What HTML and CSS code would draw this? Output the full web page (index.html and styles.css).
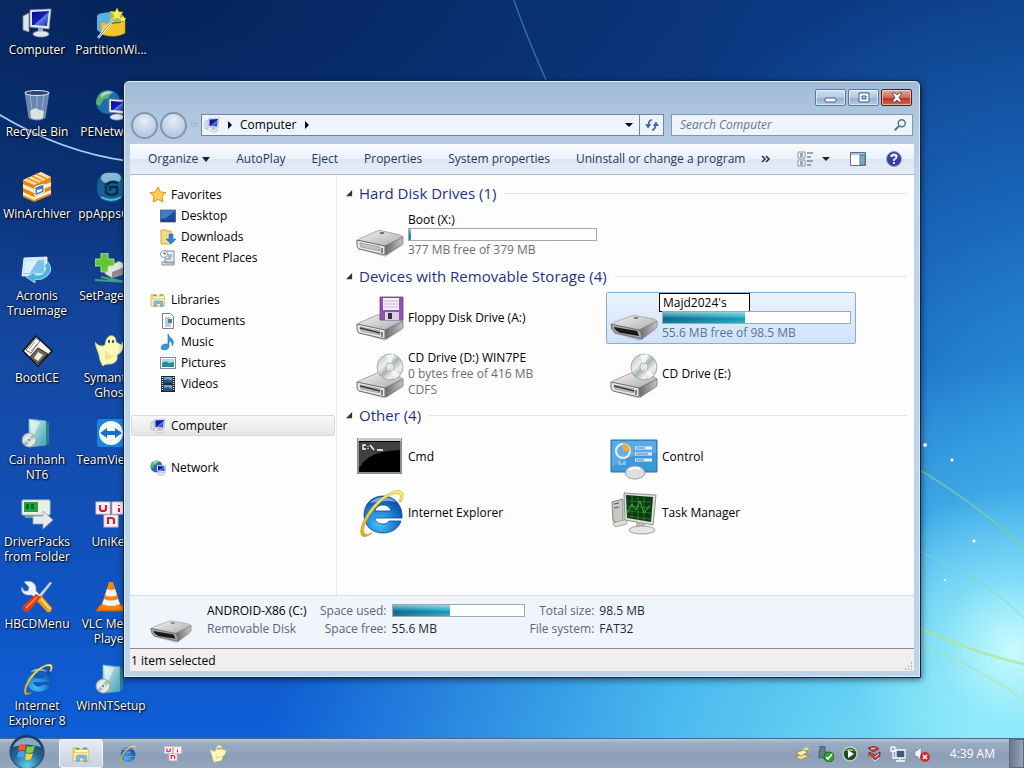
FILE: index.html
```html
<!DOCTYPE html>
<html lang="en">
<head>
  <meta charset="UTF-8" />
  <meta name="viewport" content="width=device-width, initial-scale=1.0" />
  <title>Computer</title>
  <link rel="stylesheet" href="styles.css">
</head>
<body>

<!-- Shared icons -->
<svg class="sprite" width="0" height="0" aria-hidden="true">
  <defs>
    <linearGradient id="g-screen" x1="0" y1="0" x2="1" y2="1">
      <stop offset="0" stop-color="#060c88" /><stop offset=".5" stop-color="#1420b4" /><stop offset=".55" stop-color="#5f7ee0" /><stop offset="1" stop-color="#1422a8" />
    </linearGradient>
    <linearGradient id="g-top" x1="0" y1="0" x2="1" y2="1">
      <stop offset="0" stop-color="#f4f4f4" /><stop offset="1" stop-color="#a9a9a9" />
    </linearGradient>
    <linearGradient id="g-side" x1="0" y1="0" x2="1" y2="0">
      <stop offset="0" stop-color="#6a6a6a" /><stop offset="1" stop-color="#c4c4c4" />
    </linearGradient>
    <linearGradient id="g-disc" x1="0" y1="0" x2="1" y2="1">
      <stop offset="0" stop-color="#b4b8b4" /><stop offset=".35" stop-color="#ececec" /><stop offset=".5" stop-color="#a3b8a6" /><stop offset=".7" stop-color="#f0f0f0" /><stop offset="1" stop-color="#adadad" />
    </linearGradient>
    <radialGradient id="g-ie" cx=".4" cy=".75" r=".8">
      <stop offset="0" stop-color="#4cc4f8" /><stop offset=".5" stop-color="#1d80d4" /><stop offset="1" stop-color="#0b3f94" />
    </radialGradient>
    <linearGradient id="g-box" x1="0" y1="0" x2="1" y2="1">
      <stop offset="0" stop-color="#d8f4f2" /><stop offset="1" stop-color="#3f9fb0" />
    </linearGradient>
    <linearGradient id="g-gold" x1="0" y1="0" x2="0" y2="1">
      <stop offset="0" stop-color="#fff27a" /><stop offset="1" stop-color="#e0a81a" />
    </linearGradient>
    <radialGradient id="g-orb" cx=".5" cy=".9" r=".9">
      <stop offset="0" stop-color="#5fd0f2" /><stop offset=".5" stop-color="#1f6596" /><stop offset="1" stop-color="#123a62" />
    </radialGradient>
  </defs>

  <symbol id="i-computer" viewBox="0 0 32 32">
    <path d="M2 9l6-3v19l-6-2z" fill="#dfe4ea" stroke="#7c8794" stroke-width=".8" />
    <path d="M9 3l21-1-2 20-19-2z" fill="#e8edf4" stroke="#8b95a4" stroke-width=".8" />
    <path d="M11 5l17-1-2 15-15-1z" fill="url(#g-screen)" />
    <path d="M17 21l5 1v4h-5z" fill="#aab4c0" />
    <ellipse cx="20" cy="27" rx="8" ry="3" fill="#e2e8f0" stroke="#98a2b0" stroke-width=".8" />
  </symbol>

  <symbol id="i-network" viewBox="0 0 32 32">
    <circle cx="13" cy="13" r="12" fill="#1c6fae" />
    <path d="M5 5c5-4 11-3 12-2l-4 6-5 2-3 6-4-2c0-4 2-8 4-10zM15 14l6-3 4 3-6 9-5-3z" fill="#5cb06a" />
    <path d="M6 5q6-5 13-1-7 0-13 5z" fill="#d6f2f6" opacity=".6" />
    <path d="M14 10l17 1v14l-17-2z" fill="#e8edf4" stroke="#7d8896" stroke-width=".8" />
    <path d="M16 12l13 1v9l-13-1z" fill="url(#g-screen)" />
    <ellipse cx="22" cy="28" rx="7" ry="3" fill="#dfe6ee" stroke="#98a2b0" stroke-width=".8" />
  </symbol>

  <symbol id="i-ie" viewBox="0 0 48 48">
    <path fill-rule="evenodd" d="M27 7C16 7 8 15 8 26s8 18 19 18c9 0 16-5 18-12H33c-1 2-3 3-6 3-5 0-8-3-8-6h27C47 16 38 7 27 7zM19 22c1-4 4-6 8-6s7 2 8 6z" fill="url(#g-ie)" stroke="#0d4a9a" stroke-width=".8" />
    <path d="M14 14c4-5 9-6 13-6 6 0 10 2 13 5-8-2-18-1-26 1z" fill="#bfe4fb" opacity=".6" />
    <path d="M43 12c2-3 2-6 0-7-6-3-20 7-29 21-6 9-8 16-5 19 2 1 4 0 7-1-4 4-10 5-11 1C3 38 11 22 22 12 31 4 43-1 46 3c2 2 1 7-1 10z" fill="url(#g-gold)" stroke="#b88a14" stroke-width=".5" />
  </symbol>

  <symbol id="i-drive" viewBox="0 0 48 48">
    <path d="M2 38l27 8 18-12-18 4z" fill="#000" opacity=".15" />
    <path d="M1 30q1-2 4-3l16-7q3-1 6 0l17 4q3 1 3 3L29 36z" fill="url(#g-top)" stroke="#8a8a8a" stroke-width=".7" />
    <path d="M29 35l18-9v7L30 44z" fill="url(#g-side)" stroke="#6c6c6c" stroke-width=".7" />
    <path d="M1 29l28 6v9L3 38q-2-1-2-4z" fill="#e6e6e6" stroke="#606060" stroke-width=".9" />
    <path d="M4 32l20 4v4L5 36z" fill="#c2c2c2" stroke="#8a8a8a" stroke-width=".6" />
    <path d="M26 37v5" stroke="#2e6b4c" stroke-width="1.400" />
    <ellipse cx="26" cy="22" rx="2.500" ry="1" fill="#666" />
  </symbol>

  <symbol id="i-slot" viewBox="0 0 48 48">
    <use href="#i-drive" />
    <path d="M4 33l20 5" stroke="#3a3a3a" stroke-width="1.500" fill="none" />
  </symbol>

  <symbol id="i-removable" viewBox="0 0 48 48">
    <path d="M3 39l27 8 17-12-18 4z" fill="#000" opacity=".15" />
    <path d="M1 31q1-2 4-3l16-6q3-1 6 0l17 3q3 1 3 3L30 37z" fill="url(#g-top)" stroke="#9a9a9a" stroke-width=".7" />
    <path d="M29 36l18-9v6L32 45z" fill="url(#g-side)" stroke="#7c7c7c" stroke-width=".7" />
    <path d="M1 30l28 6q3 2 3 9L5 39q-4-3-4-9z" fill="#a4a4a4" stroke="#5e5e5e" stroke-width=".8" />
    <path d="M4 33l23 4 2 5-18-3q-6-2-7-6z" fill="#191919" />
    <ellipse cx="26" cy="24" rx="2.500" ry="1" fill="#777" />
  </symbol>

  <symbol id="i-floppydrive" viewBox="0 0 48 48">
    <use href="#i-slot" y="1" />
    <path d="M24 3h23v23H24z" fill="#8d55ad" stroke="#6b3a8a" stroke-width=".8" />
    <path d="M27 4h16v12H27z" fill="#f4eef8" />
    <path d="M28 7h14M28 10h14M28 13h14" stroke="#c9b6d6" stroke-width="1" />
    <path d="M29 18h14v8H29z" fill="#d9d0e2" />
    <path d="M32 19h4v6h-4z" fill="#3c2a4c" />
  </symbol>

  <symbol id="i-cd" viewBox="0 0 48 48">
    <use href="#i-slot" y="3" />
    <circle cx="34" cy="17" r="13" fill="url(#g-disc)" stroke="#9b9b9b" stroke-width=".8" />
    <path d="M34 17L30 5l8-1zM34 17l5 12 5-4z" fill="#fff" opacity=".6" />
    <circle cx="34" cy="17" r="4" fill="#ececec" stroke="#a8a8a8" stroke-width=".8" />
    <circle cx="34" cy="17" r="1.500" fill="#fff" stroke="#b0b0b0" stroke-width=".5" />
  </symbol>

  <symbol id="i-setup" viewBox="0 0 32 32">
    <path d="M8 2l17 2v24L8 30z" fill="url(#g-box)" stroke="#6fb3bd" stroke-width=".8" />
    <path d="M25 4l3 2v20l-3 2z" fill="#2d7f90" />
    <path d="M10 4l9 1-6 14-3-2z" fill="#fff" opacity=".5" />
    <circle cx="8" cy="23" r="7" fill="url(#g-disc)" stroke="#8a9a9a" stroke-width=".8" />
    <circle cx="8" cy="23" r="2" fill="#5b96a4" stroke="#fff" />
  </symbol>

  <symbol id="i-ghost" viewBox="0 0 32 32">
    <path d="M15 1c4-1 6 2 6 6l5 3 2-3c1 3 0 8-3 11l-3 2c1 6-2 8-6 9-4 0-6 0-8 2-2-3-3-5-4-11C3 16 1 13 0 7c3 4 7 5 10 3 1-5 2-8 5-9z" fill="#fbf8b8" stroke="#d6cf82" stroke-width=".8" />
    <path d="M14 5v3M18 5v3" stroke="#333" stroke-width="1.600" />
    <path d="M10 15c2 4 6 6 10 5-3 4-7 5-10 4z" fill="#e7dd7c" opacity=".7" />
  </symbol>

  <symbol id="i-unikey" viewBox="0 0 32 32">
    <g fill="#fdf3f4" stroke="#e0b9c0" stroke-width="1">
      <rect x="1" y="3" width="14" height="12" /><rect x="17" y="3" width="14" height="12" /><rect x="9" y="16" width="14" height="12" />
    </g>
    <path d="M5 6v4q0 2 3 2t3-2V6M24 9v4M24 6v1M13 25v-6h3q3 0 3 2v4" fill="none" stroke="#cc1f38" stroke-width="2.200" />
  </symbol>

  <symbol id="i-folder" viewBox="0 0 32 32">
    <path d="M2 5h10l3 3h14v20H2z" fill="#f0d77a" stroke="#c6a347" />
    <path d="M6 9h22v6H6z" fill="#fffbe6" /><path d="M7 7h6M19 6h8" stroke="#67b04a" stroke-width="3" />
    <path d="M2 13h28v15H2z" fill="#f9e9a2" stroke="#cfae52" />
    <path d="M8 29v-8q0-3 3-3h12q3 0 3 3v8h-5v-6h-8v6z" fill="#7fc0e6" stroke="#4a8cb8" />
  </symbol>
</svg>

<main class="desktop">
  <svg class="wallpaper" viewBox="0 0 1024 738" preserveAspectRatio="none" aria-hidden="true">
    <path d="M-5 112Q60 152 128 161" fill="none" stroke="#a9d0f5" stroke-width="1.800" />
    <path d="M514 0Q524 30 546 80" fill="none" stroke="#3f86b8" stroke-width="1.500" opacity=".7" />
    <path d="M920 470Q985 510 1024 548" fill="none" stroke="#7fcf9a" stroke-width="2" opacity=".7" />
    <path d="M920 552Q980 575 1024 618" fill="none" stroke="#8fd8b0" stroke-width="1.500" opacity=".5" />
    <path d="M920 628Q980 655 1024 664" fill="none" stroke="#a9e88a" stroke-width="2.500" opacity=".7" />
    <path d="M920 644Q980 668 1024 700" fill="none" stroke="#a9e88a" stroke-width="1.500" opacity=".5" />
    <g fill="#fff"><circle cx="925" cy="445" r="2" /><circle cx="952" cy="460" r="1.500" /><circle cx="974" cy="541" r="1.500" /><circle cx="945" cy="580" r="1" /></g>
  </svg>

  <nav class="shortcuts" aria-label="Desktop">
    <a href="#"><svg><use href="#i-computer" /></svg><span>Computer</span></a>
    <a href="#">
      <svg viewBox="0 0 32 32">
        <path d="M4 3h24l-4 26q-8 4-16 0z" fill="#b9cde6" opacity=".55" stroke="#dce8f4" stroke-width=".8" />
        <ellipse cx="16" cy="4" rx="12" ry="2.500" fill="#2b4570" stroke="#dfeaf6" />
        <path d="M9 6l3 22M16 7v22M23 6l-3 22" stroke="#e9f2fb" opacity=".4" /><path d="M9 22l5-3 5 2 4 1-1 7q-6 3-12 0z" fill="#eef0ea" opacity=".85" />
      </svg>
      <span>Recycle Bin</span>
    </a>
    <a href="#">
      <svg viewBox="0 0 32 32">
        <path d="M2 9l18-8 10 5v18l-17 7L2 26z" fill="#e8860c" /><path d="M2 9l18-8 10 5-17 8z" fill="#fbe2ac" />
        <path d="M6 7l11 5M11 5l10 5M15 3l11 5" stroke="#e79a22" stroke-width="1.500" />
        <path d="M2 13l11 5 17-7v4l-17 7-11-5zM2 21l11 5 17-7v3l-17 7-11-5z" fill="#fdeed0" />
        <path d="M14 16l9-3v8l-9 4z" fill="#2d86c8" stroke="#fff" /><path d="M16 19l5-1v2l-5 2z" fill="#fff" />
      </svg>
      <span>WinArchiver</span>
    </a>
    <a href="#">
      <svg viewBox="0 0 32 32">
        <path d="M3 5l23-1v19H1z" fill="#cfeafa" stroke="#fff" stroke-width=".8" /><path d="M5 8l18-1v13l-20 1z" fill="#7dc2ea" /><path d="M5 8l12-1-8 13H3z" fill="#d9f2fd" />
        <path d="M27 9q6 8-1 14-6 5-12 3v4l-9-6 9-5v3q8 1 10-4 2-4-1-5z" fill="#4cb0de" stroke="#b8e8fb" stroke-width=".8" />
      </svg>
      <span>Acronis TrueImage</span>
    </a>
    <a href="#">
      <svg viewBox="0 0 32 32">
        <path d="M15 1l16 15-14 15L2 16z" fill="#f5f0e6" stroke="#111" stroke-width="1.500" /><path d="M17 13l10 6-10 10-8-7z" fill="#6f675d" stroke="#222" /><path d="M17 17l5 3-5 6-4-3z" fill="#efe9de" />
        <path d="M15 3L5 15l5 3 9-12z" fill="#fff" stroke="#444" stroke-width=".8" /><path d="M14 7l-6 7M16 9l-6 7" stroke="#9c968c" />
      </svg>
      <span>BootICE</span>
    </a>
    <a href="#"><svg><use href="#i-setup" /></svg><span>Cai nhanh NT6</span></a>
    <a href="#">
      <svg viewBox="0 0 32 32">
        <rect x="1" y="1" width="28" height="15" rx="1" fill="#e9efe9" stroke="#b5c3b8" /><path d="M3 3h14v10H3z" fill="#22a344" /><path d="M5 5h3v5H5zM10 5h3v5h-3z" fill="#0c6a26" /><path d="M4 16h20v3H4z" fill="#5fae72" />
        <path d="M12 17h10v-5l10 9-10 9v-5H12z" fill="#e6eaee" stroke="#9aa6b0" stroke-width=".8" />
      </svg>
      <span>DriverPacks from Folder</span>
    </a>
    <a href="#">
      <svg viewBox="0 0 32 32">
        <path d="M31 2l-2-1-11 13 2 2z" fill="#d6dde4" stroke="#8793a0" stroke-width=".7" />
        <path d="M3 1l5 5-1 4H3L1 6Q-1 12 6 14h5l5 5 4-4-5-5Q16 1 7 0z" fill="#eef2f5" stroke="#98a4ae" stroke-width=".7" />
        <path d="M20 14l-5 5 11 12q5 1 5-4z" fill="#f39a16" /><path d="M20 18l9 10" stroke="#ffd476" stroke-width="2" />
        <path d="M20 16l-5-3L2 25q-1 6 5 6z" fill="#e83a12" /><path d="M16 16L5 27" stroke="#ff9a50" stroke-width="1.500" />
      </svg>
      <span>HBCDMenu</span>
    </a>
    <a href="#"><svg><use href="#i-ie" /></svg><span>Internet Explorer 8</span></a>

    <a href="#">
      <svg viewBox="0 0 32 32">
        <path d="M2 9q0-3 13-4v22Q2 26 2 22z" fill="#58b4e6" /><path d="M6 15q12 4 24-1v12q-10 6-24 1z" fill="#f0c62a" stroke="#c39412" stroke-width=".7" />
        <path d="M15 4q14 1 15 9-8 4-15 2z" fill="#8fc94a" /><path d="M3 31L21 9" stroke="#eef2f6" stroke-width="2.500" /><path d="M3 31L21 9" stroke="#6d7c8c" stroke-width="1" />
        <path d="M22 1l2 4h4l-3 4 1 4-4-2-4 2 1-4-3-4h4z" fill="#ffe85a" stroke="#d4a315" stroke-width=".5" /><path d="M28 9l1 2h2l-1 2v2l-2-1-2 1v-2l-1-2h2z" fill="#ffe85a" />
      </svg>
      <span>PartitionWi...</span>
    </a>
    <a href="#"><svg><use href="#i-network" /></svg><span>PENetwork</span></a>
    <a href="#">
      <svg viewBox="0 0 32 32">
        <rect x="2" y="1" width="28" height="30" rx="13" fill="#15608c" /><rect x="6" y="2" width="20" height="10" rx="6" fill="#b5e1f2" opacity=".7" />
        <path d="M23 12q-7-3-12 2v8q5 4 11 0v-6h-7v4" fill="none" stroke="#062d50" stroke-width="2.500" /><path d="M6 26q10 6 20 0" stroke="#58b4d8" stroke-width="2" fill="none" />
      </svg>
      <span>ppAppsGen</span>
    </a>
    <a href="#">
      <svg viewBox="0 0 32 32">
        <path d="M10 15l14-7 8 4v8l-15 5-7-4z" fill="#e4e4e4" stroke="#777" /><path d="M17 19l15-6v6l-15 6z" fill="#8d8d8d" />
        <path d="M0 27l32 2M6 24l24 5" stroke="#3ea08c" stroke-width="2" /><path d="M6 0h7v6h6v7h-6v6H6v-6H0V6h6z" fill="#62c72e" stroke="#c5f29a" stroke-width=".8" />
      </svg>
      <span>SetPageFile</span>
    </a>
    <a href="#"><svg><use href="#i-ghost" /></svg><span>Symantec Ghost</span></a>
    <a href="#">
      <svg viewBox="0 0 32 32">
        <rect x="2" y="2" width="28" height="28" rx="3" fill="#1b84dc" /><circle cx="16" cy="16" r="12" fill="#f4f9fe" />
        <path d="M5 16l7-5v3h8v-3l7 5-7 5v-3h-8v3z" fill="#1472c8" />
      </svg>
      <span>TeamViewer</span>
    </a>
    <a href="#"><svg><use href="#i-unikey" /></svg><span>UniKey</span></a>
    <a href="#">
      <svg viewBox="0 0 32 32">
        <path d="M5 24h22l4 6H1z" fill="#f07a10" stroke="#c25a04" /><path d="M14 1h4l8 25q-10 5-20 0z" fill="#f58416" />
        <path d="M12 8q4 2 8 0l2 6q-6 3-12 0zM9 18q7 3 14 0l2 5q-9 4-18 0z" fill="#f6f3ee" />
      </svg>
      <span>VLC Media Player</span>
    </a>
    <a href="#"><svg><use href="#i-setup" /></svg><span>WinNTSetup</span></a>
  </nav>

  <section class="window">
    <header class="title-bar">
      <button class="caption" aria-label="Minimize"><svg viewBox="0 0 14 12"><rect x="1" y="6" width="11" height="4" rx="1" /></svg></button>
      <button class="caption" aria-label="Maximize"><svg viewBox="0 0 14 12"><path d="M2 1h10v9H2zM5 4h4v3H5z" fill-rule="evenodd" /></svg></button>
      <button class="caption close" aria-label="Close"><svg viewBox="0 0 14 12"><path d="M2 1h3l2 2 2-2h3L9 5.500 12 10H9L7 8l-2 2H2l3-4.500z" /></svg></button>
    </header>

    <div class="nav-row">
      <div class="travel">
        <button aria-label="Back"></button>
        <button aria-label="Forward"></button>
        <svg viewBox="0 0 10 8"><path d="M1 2h8L5 6z" fill="none" stroke="#9fb3cb" /></svg>
      </div>
      <div class="address">
        <svg class="icon16"><use href="#i-computer" /></svg>
        <svg class="arrow" viewBox="0 0 8 8"><path d="M2 0l4 4-4 4z" /></svg>
        <a href="#">Computer</a>
        <svg class="arrow" viewBox="0 0 8 8"><path d="M2 0l4 4-4 4z" /></svg>
        <button class="history" aria-label="Previous locations"><svg class="arrow" viewBox="0 0 8 8"><path d="M0 2h8L4 6z" /></svg></button>
        <button class="refresh" aria-label="Refresh">
          <svg viewBox="0 0 16 16"><path d="M0 7h7L3.500 12zM9 9h7l-3.500-5z" fill="#3f63b4" /><path d="M4 8q0-5 4-6M12 8q0 5-4 6" fill="none" stroke="#3f63b4" stroke-width="2" /></svg>
        </button>
      </div>
      <label class="search">
        <input type="text" placeholder="Search Computer" aria-label="Search Computer" />
        <svg viewBox="0 0 16 16"><circle cx="10" cy="6" r="4" fill="#eef5fc" stroke="#4a6f9c" stroke-width="1.600" /><path d="M7 9l-5 5" stroke="#4a6f9c" stroke-width="2.400" /></svg>
      </label>
    </div>

    <div class="toolbar">
      <button>Organize <svg class="arrow" viewBox="0 0 8 8"><path d="M0 2h8L4 7z" /></svg></button>
      <button>AutoPlay</button>
      <button>Eject</button>
      <button>Properties</button>
      <button>System properties</button>
      <button>Uninstall or change a program</button>
      <button class="more" aria-label="More commands"><svg viewBox="0 0 10 10"><path d="M1 2l3 3-3 3M5 2l3 3-3 3" fill="none" stroke="#1e2c48" stroke-width="1.500" /></svg></button>
      <div class="tools">
        <button aria-label="Change your view">
          <svg class="icon16" viewBox="0 0 16 16"><path d="M1 1h7v6H1zM1 9h7v6H1z" fill="#f4f6f8" stroke="#8c97a5" /><path d="M3 3h3M3 5h3M3 11h3M3 13h3M10 2h6M10 6h4M10 10h6M10 14h4" stroke="#47566b" /></svg>
          <svg class="arrow" viewBox="0 0 8 8"><path d="M0 2h8L4 6z" /></svg>
        </button>
        <button aria-label="Show the preview pane">
          <svg class="icon16" viewBox="0 0 16 16"><path d="M.5 1.500h15v13H.5z" fill="#fff" stroke="#5c7086" /><path d="M1 2h14v2H1z" fill="#a8c4dc" /><path d="M10 4h5v10h-5z" fill="#7fa9c4" stroke="#4f7890" /></svg>
        </button>
        <button aria-label="Get help">
          <svg class="icon16" viewBox="0 0 16 16"><circle cx="8" cy="8" r="7.500" fill="#34429c" stroke="#8f9fc6" /><path d="M3 5q5-5 10 0-5 2-10 0z" fill="#b8c3ec" opacity=".6" /><path d="M5.500 6q0-2.500 2.500-2.500T10.500 6Q10.500 7.500 8 8.500V10M8 11v2" fill="none" stroke="#fff" stroke-width="1.700" /></svg>
        </button>
      </div>
    </div>

    <div class="content">
      <nav class="tree" aria-label="Folders">
        <ul>
          <li><a href="#"><svg viewBox="0 0 16 16"><path d="M8 0l2.300 5 5.700.6-4 4L13 15l-5-2.600L3 15l1-5.400-4-4L5.700 5z" fill="#fcd254" stroke="#d98f1e" /></svg>Favorites</a>
            <ul>
              <li><a href="#"><svg viewBox="0 0 16 16"><path d="M0 2h16v12H0z" fill="#1d4c9c" stroke="#6c8ab8" /><path d="M1 3h14l-9 7-5 1z" fill="#3f7cc4" /><path d="M1 13h14" stroke="#0a2550" /></svg>Desktop</a></li>
              <li><a href="#"><svg viewBox="0 0 16 16"><path d="M1 1h5l1 1h4v13H1z" fill="#f6dc80" stroke="#cda848" /><path d="M9 5h4v5h3l-5 5-5-5h3z" fill="#2c86d8" stroke="#1b5ea6" stroke-width=".5" /></svg>Downloads</a></li>
              <li><a href="#"><svg viewBox="0 0 16 16"><path d="M5 1h9v12H5zM2 12h12v3H2z" fill="#eef2f6" stroke="#7d8a98" /><circle cx="4" cy="4" r="3.500" fill="#fff" stroke="#8796a5" /><path d="M4 2v2h2" fill="none" stroke="#445" /><path d="M8 5h4M8 7h4M6 9h5" stroke="#4d86bc" /></svg>Recent Places</a></li>
            </ul>
          </li>
          <li><a href="#"><svg><use href="#i-folder" /></svg>Libraries</a>
            <ul>
              <li><a href="#"><svg viewBox="0 0 16 16"><path d="M2.500.5h8l3 3v12h-11z" fill="#fff" stroke="#77828e" /><path d="M5 5h5M5 7h3M5 9h3M5 11h6M5 13h6" stroke="#8494a4" /><path d="M8 6h4v4H8z" fill="#4d7ea8" /></svg>Documents</a></li>
              <li><a href="#"><svg viewBox="0 0 16 16"><path d="M8 0q1 3 4 5 3 3 0 7 1-4-3-5v6q-1 3-5 3-3 0-3-3 1-3 5-3h2z" fill="#2f9ae2" stroke="#1b6db4" stroke-width=".6" /></svg>Music</a></li>
              <li><a href="#"><svg viewBox="0 0 16 16"><path d="M.5 2.500h15v11H.5z" fill="#fff" stroke="#7a8a9a" /><path d="M2 4h12v8H2z" fill="#a6dcf2" /><path d="M2 8q4-3 7 0l5-1v5H2z" fill="#2a8a9a" /></svg>Pictures</a></li>
              <li><a href="#"><svg viewBox="0 0 16 16"><path d="M1 0h14v16H1z" fill="#1e2733" /><path d="M4 1h8v6H4zM4 9h8v6H4z" fill="#6aa6dc" /><path d="M4 4q4-2 8 1v2H4zM4 12q4-2 8 1v2H4z" fill="#29527e" /><path d="M2.500 1v14M13.500 1v14" stroke="#dfe6ee" stroke-width="1.400" stroke-dasharray="1 1" /></svg>Videos</a></li>
            </ul>
          </li>
          <li><a href="#" class="selected"><svg><use href="#i-computer" /></svg>Computer</a></li>
          <li><a href="#"><svg><use href="#i-network" /></svg>Network</a></li>
        </ul>
      </nav>

      <div class="files">
        <section class="group">
          <h2><svg viewBox="0 0 8 8"><path d="M7 0v7H0z" /></svg>Hard Disk Drives (1)</h2>
          <div class="items">
            <div class="item">
              <svg><use href="#i-drive" /></svg>
              <div class="info">
                <p>Boot (X:)</p>
                <div class="meter"><div style="width: 1%"></div></div>
                <p class="dim">377 MB free of 379 MB</p>
              </div>
            </div>
          </div>
        </section>

        <section class="group">
          <h2><svg viewBox="0 0 8 8"><path d="M7 0v7H0z" /></svg>Devices with Removable Storage (4)</h2>
          <div class="items">
            <div class="item">
              <svg><use href="#i-floppydrive" /></svg>
              <div class="info"><p>Floppy Disk Drive (A:)</p></div>
            </div>
            <div class="item selected">
              <svg><use href="#i-removable" /></svg>
              <div class="info">
                <input class="rename" type="text" value="Majd2024's" aria-label="Drive name" />
                <div class="meter"><div style="width: 44%"></div></div>
                <p class="dim">55.6 MB free of 98.5 MB</p>
              </div>
            </div>
            <div class="item">
              <svg><use href="#i-cd" /></svg>
              <div class="info">
                <p>CD Drive (D:) WIN7PE</p>
                <p class="dim">0 bytes free of 416 MB</p>
                <p class="dim">CDFS</p>
              </div>
            </div>
            <div class="item">
              <svg><use href="#i-cd" /></svg>
              <div class="info"><p>CD Drive (E:)</p></div>
            </div>
          </div>
        </section>

        <section class="group">
          <h2><svg viewBox="0 0 8 8"><path d="M7 0v7H0z" /></svg>Other (4)</h2>
          <div class="items">
            <div class="item">
              <svg viewBox="0 0 48 48">
                <path d="M2 6h43v34H2z" fill="#000" stroke="#8d8d8d" stroke-width="2" /><path d="M2 5h43v3H2z" fill="#c9c9c9" />
                <path d="M3 9h41v8Q12 18 4 34H3z" fill="#555" opacity=".75" />
                <path d="M10 12H7v4h3M12 13v1M12 15v1M14 12l4 5M21 17h6" fill="none" stroke="#fff" stroke-width="1.300" />
              </svg>
              <div class="info"><p>Cmd</p></div>
            </div>
            <div class="item">
              <svg viewBox="0 0 48 48">
                <path d="M1 7h46v32H1z" fill="#3d98da" stroke="#2a6ea8" /><path d="M2 8h44v12Q20 20 2 34z" fill="#74bdee" opacity=".5" />
                <circle cx="13" cy="18" r="7" fill="#5fb0e8" stroke="#e4f3fd" stroke-width="2" /><path d="M13 18v-8a8 8 0 0 1 7 8z" fill="#f2a73a" />
                <path d="M25 15h17M25 21h17M25 27h17" stroke="#e4f3fd" stroke-width="3" /><path d="M26 15h9M26 21h12M26 27h8" stroke="#2a7ac0" stroke-width="1" /><path d="M8 29h3M13 29h3M8 31h8" stroke="#bfe2f8" />
                <path d="M15 41q1-8 10-8t10 8q-3 5-10 5t-10-5z" fill="#dcdee2" stroke="#9aa0a8" /><path d="M19 37q5-4 11-1" stroke="#fff" stroke-width="2" fill="none" />
              </svg>
              <div class="info"><p>Control</p></div>
            </div>
            <div class="item">
              <svg><use href="#i-ie" /></svg>
              <div class="info"><p>Internet Explorer</p></div>
            </div>
            <div class="item">
              <svg viewBox="0 0 48 48">
                <path d="M2 13l11-3v26L3 32z" fill="#c9c9c4" stroke="#85857f" /><path d="M4 15l5-1M4 19l5-1" stroke="#555" /><path d="M3 34l14-4v5l-12 3z" fill="#deded8" stroke="#8f8f8a" stroke-width=".7" />
                <path d="M14 4l32 2-3 30-28-5z" fill="#e0e0da" stroke="#90908a" /><path d="M16 6l27 2-2 25-24-4z" fill="#0c3a12" />
                <path d="M17 12l24 1M17 17l24 2M17 22l24 2M17 27l24 3M22 7v22M28 8v23M34 8v24" stroke="#2e8a34" stroke-width=".7" />
                <path d="M17 24l5-9 4 6 4-9 4 12 6-8" fill="none" stroke="#45b23c" stroke-width="1" />
                <path d="M26 33l9 2v5h-9z" fill="#b8b8b4" /><ellipse cx="32" cy="41" rx="13" ry="4" fill="#e6e6e2" stroke="#a0a09c" />
              </svg>
              <div class="info"><p>Task Manager</p></div>
            </div>
          </div>
        </section>
      </div>
    </div>

    <footer class="details">
      <svg><use href="#i-removable" /></svg>
      <dl>
        <dt class="name">ANDROID-X86 (C:)</dt>
        <dd class="label">Space used:</dd>
        <dd><div class="meter"><div style="width: 44%"></div></div></dd>
        <dd class="label">Total size:</dd>
        <dd>98.5 MB</dd>
        <dt>Removable Disk</dt>
        <dd class="label">Space free:</dd>
        <dd>55.6 MB</dd>
        <dd class="label">File system:</dd>
        <dd>FAT32</dd>
      </dl>
    </footer>
    <div class="status">
      <span>1 item selected</span>
      <svg viewBox="0 0 10 10"><path d="M8 2h1M8 5h1M8 8h1M5 5h1M5 8h1M2 8h1" stroke="#a8a8a8" stroke-width="1.500" /></svg>
    </div>
  </section>
</main>

<footer class="taskbar">
  <button class="start" aria-label="Start">
    <svg viewBox="0 0 36 36">
      <circle cx="18" cy="18" r="17" fill="url(#g-orb)" stroke="#28405e" />
      <path d="M4 13a15 15 0 0 1 28 0q-14-5-28 0z" fill="#d6eaf6" opacity=".6" />
      <path d="M10 11q4-2 7 0l-1 6q-4-2-7 0z" fill="#f0592a" /><path d="M18 12q4 2 8-1l-2 7q-4 2-7 0z" fill="#8ecb3c" />
      <path d="M9 18q4-2 7 0l-1 6q-4-2-7 0z" fill="#3fa4ea" /><path d="M17 19q4 2 7 0l-2 6q-3 2-6 0z" fill="#fcd03a" />
    </svg>
  </button>
  <button class="task active" aria-label="Windows Explorer"><svg><use href="#i-folder" /></svg></button>
  <button class="task" aria-label="Internet Explorer"><svg><use href="#i-ie" /></svg></button>
  <button class="task" aria-label="UniKey"><svg><use href="#i-unikey" /></svg></button>
  <button class="task" aria-label="Ghost"><svg><use href="#i-ghost" /></svg></button>

  <div class="tray">
    <svg viewBox="0 0 16 16"><path d="M1 11l8-3 6 2-8 4z" fill="#e9dc9a" stroke="#8d7a34" stroke-width=".7" /><path d="M2 7l7-3 5 2-7 4z" fill="#f8f0b8" stroke="#8d7a34" stroke-width=".7" /><path d="M8 4l5-3 2 3z" fill="#efe08a" /></svg>
    <svg viewBox="0 0 16 16"><path d="M2 0h5v5h1v7H1V5h1z" fill="#66788e" stroke="#3e4c5e" stroke-width=".7" /><circle cx="11" cy="11" r="5" fill="#2fa52f" stroke="#156815" /><path d="M8 11l2 2 4-5" fill="none" stroke="#fff" stroke-width="1.700" /></svg>
    <svg viewBox="0 0 16 16"><circle cx="8" cy="8" r="7" fill="#1f4a24" stroke="#b9d4b4" stroke-width="1.500" /><path d="M3 5q5-5 10 0z" fill="#7fb57c" /><path d="M6 4l6 4-6 4z" fill="#fff" /></svg>
    <svg viewBox="0 0 16 16"><path d="M2 2l7-2 4 3-6 3zM3 6l6 3 5-3v4l-5 4-6-3z" fill="#c9404a" stroke="#6e1f28" stroke-width=".7" /><path d="M5 3l4-1M9 11l4-3" stroke="#fff" /><path d="M3 10l6 5 4-3" fill="none" stroke="#dfe3ea" /></svg>
    <svg viewBox="0 0 16 16"><path d="M6 4h9v8H6z" fill="#46597a" stroke="#fff" stroke-width="1.300" /><path d="M10 12v2M6 15h9M1 1v4h4V1M3 5v7h3M2 0v2M4 0v2" fill="none" stroke="#fff" stroke-width="1.300" /></svg>
    <svg viewBox="0 0 16 16"><path d="M1 5h2l4-4v13l-4-4H1z" fill="#f6f8fb" stroke="#5d6c82" stroke-width=".5" /><circle cx="11" cy="11" r="5" fill="#d8262c" /><path d="M9 9l4 4M13 9l-4 4" stroke="#fff" stroke-width="1.700" /></svg>
    <time>4:39 AM</time>
  </div>
  <button class="show-desktop" aria-label="Show desktop"></button>
</footer>

</body>
</html>
```

FILE: styles.css
```css
* {
  box-sizing: border-box;
}

body {
  margin: 0;
  height: 100vh;
  display: flex;
  flex-direction: column;
  overflow: hidden;
  font-family: "Open Sans", "Noto Sans", sans-serif;
  font-size: 12px;
  line-height: 16px;
  color: #000;
}

button,
input {
  font: inherit;
  color: inherit;
}

button {
  display: flex;
  align-items: center;
  justify-content: center;
  padding: 0;
  border: none;
  background: none;
}

a {
  color: inherit;
  text-decoration: none;
}

svg {
  flex: none;
}

p, dl, dd, dt, h2, ul {
  margin: 0;
  padding: 0;
}

.sprite {
  position: absolute;
}

.icon16 {
  width: 16px;
  height: 16px;
}

.arrow {
  width: 8px;
  height: 8px;
  fill: #1a2233;
}

/* Desktop */
.desktop {
  position: relative;
  flex: 1;
  min-height: 0;
  background:
    radial-gradient(ellipse 16% 22% at 99% 88%, #c8fbff 0%, rgba(160, 240, 252, 0.6) 45%, transparent 100%),
    radial-gradient(ellipse 70% 50% at 96% 100%, #7fe6f8 0%, #48b8ee 45%, transparent 100%),
    radial-gradient(ellipse 50% 75% at 105% 65%, #2f9fe2 0%, rgba(30, 120, 208, 0.7) 50%, transparent 100%),
    radial-gradient(ellipse 60% 40% at 15% 0%, #06235a 0%, transparent 100%),
    linear-gradient(#0b3880 0%, #0e3a86 25%, #1549a4 50%, #1052bc 75%, #0e5fd8 100%);
}

.wallpaper {
  position: absolute;
  inset: 0;
  width: 100%;
  height: 100%;
}

.shortcuts {
  position: relative;
  height: 100%;
  width: 148px;
  display: grid;
  grid-auto-flow: column;
  grid-template-rows: repeat(9, 82px);
  grid-auto-columns: 74px;
}

.shortcuts a {
  display: flex;
  flex-direction: column;
  align-items: center;
  gap: 3px;
  padding-top: 7px;
  color: #fff;
  line-height: 15px;
  text-align: center;
  text-shadow: 1px 1px 2px #000, 0 0 2px #000;
}

.shortcuts svg {
  width: 32px;
  height: 32px;
}

/* Explorer window */
.window {
  position: absolute;
  inset: 80px 103px 60px 123px;
  display: flex;
  flex-direction: column;
  padding: 0 6px 6px;
  border: 1px solid #14263c;
  border-radius: 6px 6px 0 0;
  background: linear-gradient(#9fb9d6 0, #b2c8e0 40px, #bfd3e9 100px, #bcd3ea 100%);
  box-shadow: inset 0 0 0 1px #dcebf8, 1px 2px 6px rgba(0, 0, 0, 0.5);
}

.title-bar {
  display: flex;
  justify-content: flex-end;
  gap: 2px;
  height: 28px;
  padding: 8px 2px 0 0;
}

.caption {
  width: 31px;
  height: 17px;
  border: 1px solid #5d7a9c;
  border-radius: 2px;
  background: linear-gradient(#cfdff0 0, #b5cbe2 50%, #93b0cf 50%, #b4cce6 100%);
  box-shadow: inset 0 0 0 1px rgba(255, 255, 255, 0.5);
}

.caption svg {
  width: 14px;
  height: 12px;
  fill: #fff;
  stroke: #44597a;
}

.caption.close {
  border-color: #5a1a18;
  background: linear-gradient(#e8a79c 0, #d4685a 50%, #b8301e 50%, #d8664a 100%);
}

.nav-row {
  display: flex;
  align-items: center;
  height: 35px;
  padding: 0 1px 3px;
}

.travel {
  display: flex;
  align-items: center;
  gap: 2px;
  width: 70px;
}

.travel button {
  width: 27px;
  height: 27px;
  border: 2px solid #8095af;
  border-radius: 50%;
  background: radial-gradient(circle at 50% 30%, #e6eef7, #b7c9dd 75%, #cbd9e8);
}

.travel svg {
  width: 10px;
  height: 8px;
}

.address {
  display: flex;
  align-items: center;
  gap: 6px;
  flex: 1;
  height: 22px;
  padding-left: 2px;
  border: 1px solid #6a86a8;
  background: #eef4fb;
}

.address .arrow {
  fill: #000;
}

.history {
  margin-left: auto;
  width: 8px;
  height: 20px;
}

.refresh {
  width: 24px;
  height: 20px;
  border-left: 1px solid #6a86a8;
}

.refresh svg,
.search svg {
  width: 14px;
  height: 14px;
}

.search {
  display: flex;
  align-items: center;
  width: 242px;
  height: 22px;
  margin-left: 7px;
  padding: 0 5px 0 8px;
  border: 1px solid #7e98b8;
  background: #eef4fb;
}

.search input {
  flex: 1;
  min-width: 0;
  padding: 0;
  border: none;
  outline: none;
  background: none;
}

.search input::placeholder {
  color: #6c7684;
  font-style: italic;
}

.toolbar {
  display: flex;
  align-items: center;
  gap: 26px;
  height: 31px;
  padding: 0 15px 0 18px;
  border-bottom: 1px solid #a8bace;
  background: linear-gradient(#fafcfe 0, #eaf1fa 50%, #dde7f4 50%, #e4edf8 100%);
  color: #1e395b;
  white-space: nowrap;
}

.toolbar button {
  gap: 4px;
}

.toolbar .more {
  margin-left: -10px;
}

.toolbar .more svg {
  width: 10px;
  height: 10px;
}

.tools {
  display: flex;
  gap: 20px;
  margin-left: auto;
}

.tools button:first-child {
  gap: 9px;
}

.content {
  display: flex;
  flex: 1;
  min-height: 0;
  background: #fdfdfd;
}

/* Folder tree */
.tree {
  width: 207px;
  padding: 9px 1px 0;
  border-right: 1px solid #e3e9f1;
}

.tree ul {
  list-style: none;
}

.tree > ul > li {
  margin-bottom: 21px;
}

.tree a {
  display: flex;
  align-items: center;
  gap: 5px;
  height: 21px;
  padding-left: 18px;
  border: 1px solid transparent;
}

.tree ul ul a {
  padding-left: 28px;
}

.tree svg {
  width: 16px;
  height: 16px;
}

.tree .selected {
  border-color: #d9d9d9;
  border-radius: 2px;
  background: linear-gradient(#f8f8f8, #e5e5e5);
}

/* File list */
.files {
  flex: 1;
  padding: 4px 7px 0 9px;
}

.group {
  margin-bottom: 1px;
}

.group h2 {
  display: flex;
  align-items: center;
  height: 30px;
  padding-bottom: 2px;
  color: #1e3287;
  font-size: 15px;
  font-weight: 400;
}

.group h2 svg {
  width: 7px;
  height: 7px;
  margin-right: 6px;
  fill: #333;
}

.group h2::after {
  content: "";
  flex: 1;
  height: 1px;
  margin-left: 8px;
  background: #e2e6ee;
}

.items {
  display: grid;
  grid-template-columns: repeat(auto-fill, 250px);
  gap: 4px;
  padding-left: 6px;
}

.item {
  display: flex;
  align-items: center;
  gap: 4px;
  height: 52px;
  padding-left: 3px;
  border: 1px solid transparent;
  border-radius: 2px;
  white-space: nowrap;
}

.item svg {
  width: 48px;
  height: 48px;
}

.item.selected {
  border-color: #84acdd;
  background: linear-gradient(#eaf3fd, #cfe2fb);
}

.info {
  width: 189px;
}

.dim {
  color: #6d6d6d;
}

.selected .dim {
  color: #5b7391;
}

.rename {
  display: block;
  width: 91px;
  height: 19px;
  margin: -2px 0 -1px -3px;
  padding: 0 3px;
  border: 1px solid #000;
  background: #fff;
}

.meter {
  height: 13px;
  margin: 0 0 1px;
  border: 1px solid #a3a8ad;
  background: #fdfdfd;
}

.meter div {
  height: 100%;
  background: linear-gradient(rgba(255, 255, 255, 0.5) 0, transparent 50%, rgba(0, 60, 80, 0.25) 60%, transparent 100%), linear-gradient(90deg, #117a9c, #2cb4cc);
}

/* Details pane */
.details {
  display: flex;
  gap: 11px;
  height: 53px;
  padding: 6px 18px 0 16px;
  border-top: 1px solid #d3dce8;
  background: #f0f4fb;
}

.details > svg {
  width: 50px;
  height: 42px;
}

.details dl {
  display: grid;
  grid-template-columns: 108px auto 133px repeat(2, auto);
  grid-auto-rows: 18px;
  align-items: center;
  justify-content: start;
  column-gap: 5px;
  color: #1e2a3c;
  white-space: nowrap;
}

.details dt,
.details .label {
  color: #5a6779;
}

.details .label {
  text-align: right;
}

.details .name {
  color: #000;
}

.status {
  display: flex;
  justify-content: space-between;
  align-items: center;
  height: 23px;
  padding: 1px 1px 0;
  border-top: 1px solid #8c8c8c;
  background: #f1efee;
}

.status svg {
  align-self: flex-end;
  width: 10px;
  height: 10px;
}

/* Taskbar */
.taskbar {
  position: relative;
  display: flex;
  align-items: center;
  height: 30px;
  padding-left: 9px;
  border-top: 1px solid #4e6688;
  background: linear-gradient(#b6c6da 0, #9bacc4 4px, #8c9db6 60%, #96a8c0 100%);
}

.start {
  margin: 0 14px 3px 0;
}

.start svg {
  width: 36px;
  height: 36px;
}

.task {
  width: 44px;
  height: 29px;
  margin-right: 2px;
}

.task svg {
  width: 18px;
  height: 18px;
}

.task.active {
  border: 1px solid #f0f5fb;
  border-radius: 3px;
  background: linear-gradient(#e6ecf4, #c6d2e2);
}

.tray {
  display: flex;
  align-items: center;
  gap: 8px;
  margin-left: auto;
  color: #fff;
}

.tray svg {
  width: 16px;
  height: 16px;
}

.tray time {
  margin: 0 14px 0 12px;
}

.show-desktop {
  width: 15px;
  height: 29px;
  border: 1px solid #5b6a80;
  background: linear-gradient(90deg, #6a788e, #96a4b8);
}
```
